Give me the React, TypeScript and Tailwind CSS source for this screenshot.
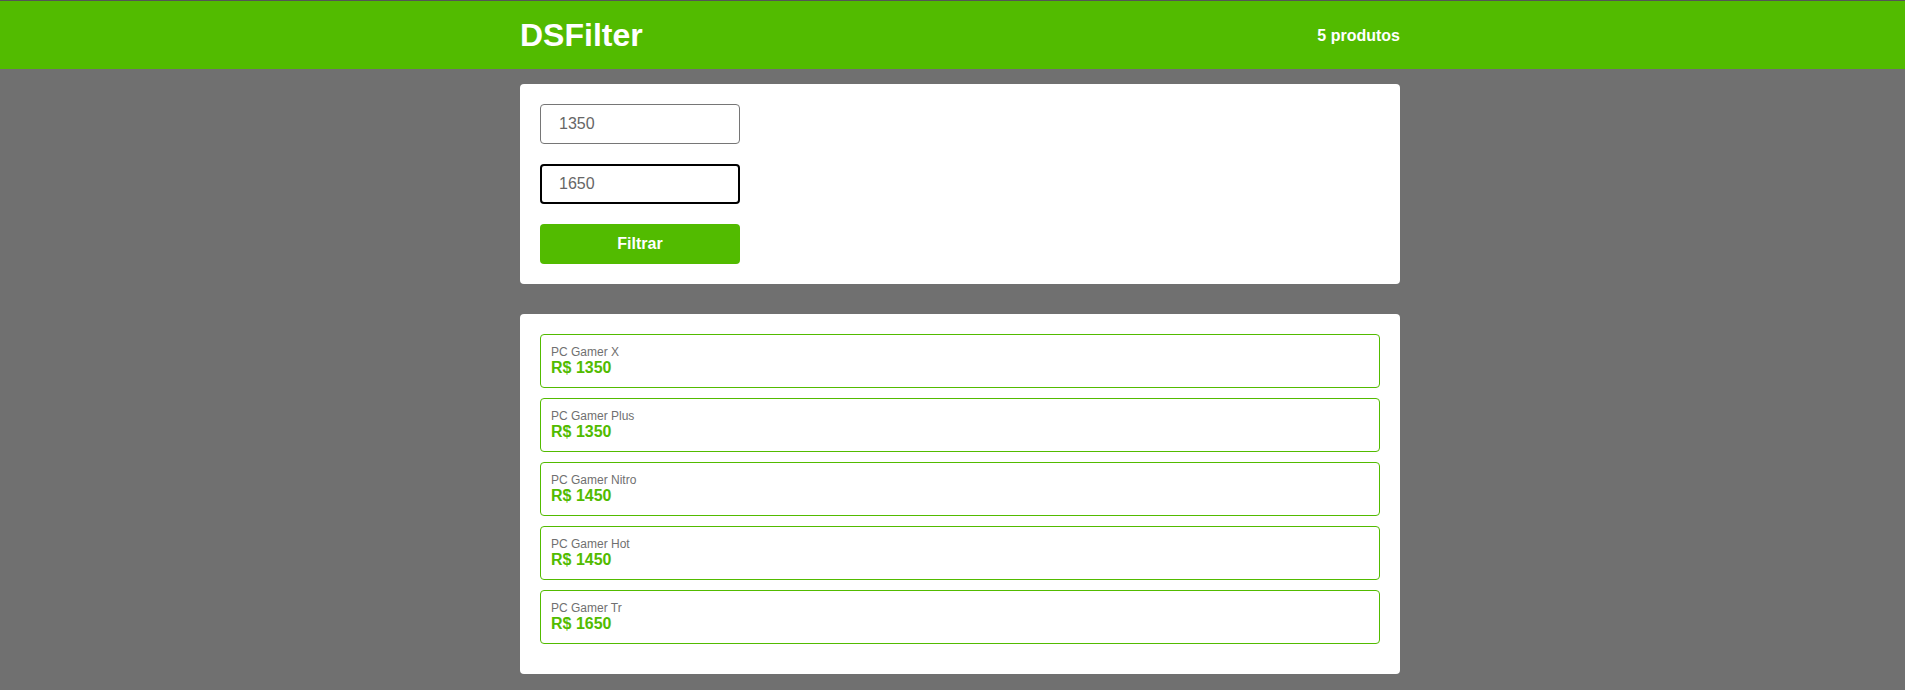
import { useState } from "react"

type Product = {
  id: number
  name: string
  price: number
}

const products: Product[] = [
  { id: 1, name: "PC Gamer X", price: 1350 },
  { id: 2, name: "PC Gamer Plus", price: 1350 },
  { id: 3, name: "PC Gamer Nitro", price: 1450 },
  { id: 4, name: "PC Gamer Hot", price: 1450 },
  { id: 5, name: "PC Gamer Tr", price: 1650 },
]

const Header = ({ count }: { count: number }) => {
  return (
    <header className="bg-[#52bb00] border-t border-[#555555] text-white">
      <div className="flex justify-center pl-[15px]">
        <div className="w-[880px] h-[68px] flex items-center justify-between">
          <h1 className="text-[32px] font-bold leading-none">DSFilter</h1>
          <p className="text-base/[18px] font-bold pt-[2px]">{count} produtos</p>
        </div>
      </div>
    </header>
  )
}

const Filter = () => {
  const [min, setMin] = useState("1350")
  const [max, setMax] = useState("1650")

  return (
    <div className="bg-white rounded p-5 flex flex-col gap-5">
      <input
        type="text"
        value={min}
        onChange={(e) => setMin(e.target.value)}
        className="w-[200px] h-10 px-[18px] text-base text-[#666666] border border-[#767676] rounded outline-none"
      />
      <input
        type="text"
        value={max}
        onChange={(e) => setMax(e.target.value)}
        className="w-[200px] h-10 px-[17px] text-base text-[#666666] border-2 border-black rounded outline-none"
      />
      <button className="w-[200px] h-10 bg-[#52bb00] text-white font-bold text-base rounded">
        Filtrar
      </button>
    </div>
  )
}

const ProductList = () => {
  return (
    <div className="bg-white rounded px-5 pt-5 pb-5 mt-[30px]">
      {products.map(p => (
        <div key={p.id} className="border border-[#52bb00] rounded p-[10px] mb-[10px]">
          <p className="text-xs/[14px] text-[#707070]">{p.name}</p>
          <p className="text-base/[18px] font-bold text-[#52bb00]">R$ {p.price}</p>
        </div>
      ))}
    </div>
  )
}

export default function App() {
  return (
    <div className="min-h-screen bg-[#707070] font-['Liberation_Sans',Arial,sans-serif]">
      <Header count={products.length} />
      <main className="flex justify-center pl-[15px] pt-[15px] pb-4">
        <div className="w-[880px]">
          <Filter />
          <ProductList />
        </div>
      </main>
    </div>
  )
}
